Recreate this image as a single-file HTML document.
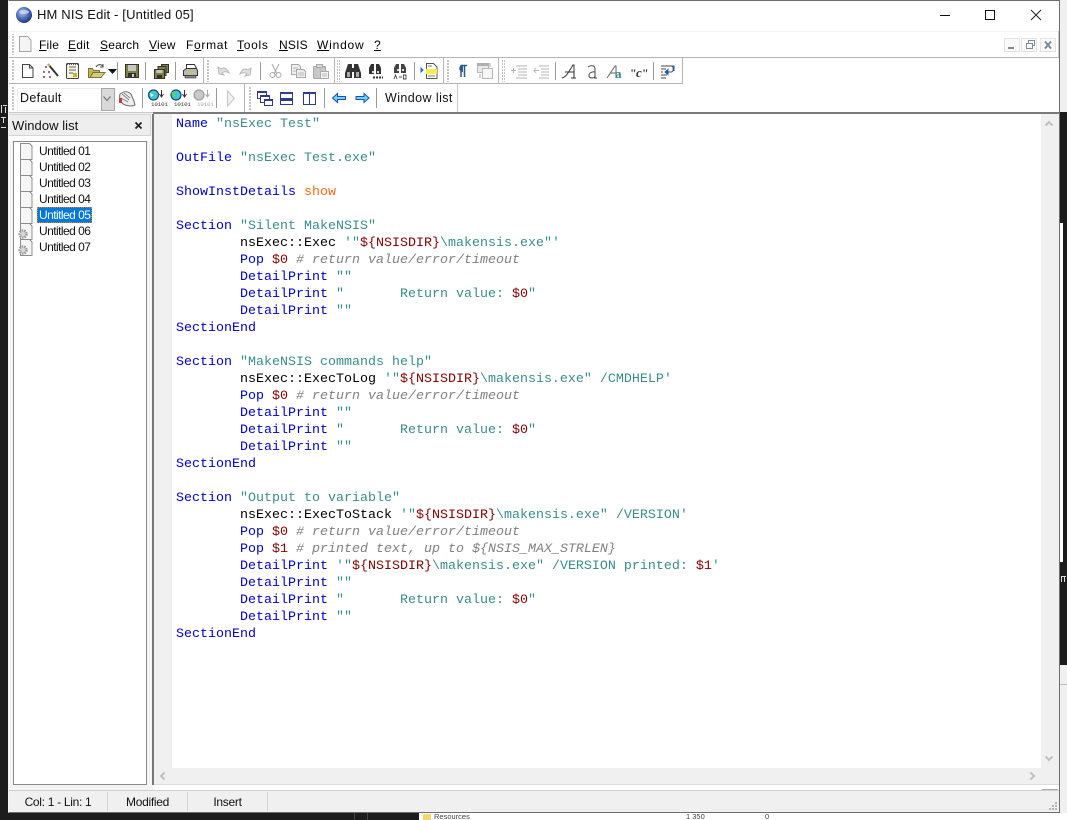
<!DOCTYPE html>
<html><head><meta charset="utf-8"><title>HM NIS Edit</title>
<style>
html,body{margin:0;padding:0;width:1067px;height:820px;overflow:hidden;background:#1c1c1c}
*{box-sizing:border-box}
.a{position:absolute}
body{position:relative;font-family:"Liberation Sans",sans-serif;color:#000}
.m{position:absolute;top:37px;font-size:12px;line-height:16px;letter-spacing:.2px;white-space:pre}
.l{position:absolute;left:39px;font-size:12px;line-height:16px;letter-spacing:-.55px;white-space:pre;color:#111}
#code{position:absolute;left:176px;top:116px;margin:0;font-family:"Liberation Mono",monospace;font-size:13.33px;line-height:17px;color:#000;white-space:pre;tab-size:8}
.k{color:#0000c8}.s{color:#3a8c8c}.v{color:#800000}.c{color:#808080;font-style:italic}.o{color:#ff6a1a}
.st{position:absolute;top:794px;font-size:12px;line-height:16px;letter-spacing:-.3px;color:#111;text-align:center}
</style></head><body>
<!-- outside desktop -->
<div class="a" style="left:1060px;top:0;width:7px;height:112px;background:#f0f0f0"></div>
<div class="a" style="left:1060px;top:223px;width:3px;height:339px;background:#fff"></div>
<div class="a" style="left:1060px;top:665px;width:7px;height:155px;background:#f0f0f0"></div>
<div class="a" style="left:1060px;top:684px;width:7px;height:1px;background:#bbb"></div>
<div class="a" style="left:419px;top:813px;width:648px;height:7px;background:#fff"></div>
<div class="a" style="left:423px;top:814px;width:8px;height:6px;background:#f5d56e"></div>
<div class="a" style="left:434px;top:813px;font-size:7.5px;line-height:8px;color:#444">Resources</div>
<div class="a" style="left:686px;top:813px;font-size:7.5px;line-height:8px;color:#444">1 350</div>
<div class="a" style="left:765px;top:813px;font-size:7.5px;line-height:8px;color:#444">0</div>
<div class="a" style="left:354px;top:813px;width:1px;height:7px;background:#444"></div>
<div class="a" style="left:367px;top:813px;width:1px;height:7px;background:#444"></div>
<!-- window -->
<div class="a" style="left:8px;top:0;width:1052px;height:813px;background:#fff;border:1px solid #6e6e6e;border-left-color:#f4f4f4;border-bottom-color:#6e6e6e"></div>
<div class="a" style="left:37px;top:7px;font-size:13px;line-height:16px;letter-spacing:.16px;color:#111;white-space:pre">HM NIS Edit - [Untitled 05]</div>
<!-- band lines -->
<div class="a" style="left:9px;top:31px;width:1050px;height:1px;background:#f2f2f2"></div>
<div class="a" style="left:9px;top:57px;width:1050px;height:1px;background:#b4b4b4"></div>
<div class="a" style="left:1058px;top:31px;width:1px;height:26px;background:#c8c8c8"></div>
<div class="a" style="left:9px;top:83px;width:674px;height:1px;background:#b4b4b4"></div>
<div class="a" style="left:682px;top:58px;width:1px;height:26px;background:#b4b4b4"></div>
<div class="a" style="left:457px;top:84px;width:1px;height:28px;background:#c8c8c8"></div>
<div class="a" style="left:9px;top:112px;width:144px;height:1px;background:#c8c8c8"></div>
<div class="a" style="left:153px;top:112px;width:906px;height:2px;background:#7a7a7a"></div>
<!-- menu -->
<div class="m" style="left:39px"><u>F</u>ile</div>
<div class="m" style="left:68px"><u>E</u>dit</div>
<div class="m" style="left:100px"><u>S</u>earch</div>
<div class="m" style="left:149px"><u>V</u>iew</div>
<div class="m" style="left:186px;letter-spacing:.7px"><span>F</span><u>o</u>rmat</div>
<div class="m" style="left:237px;letter-spacing:.7px"><u>T</u>ools</div>
<div class="m" style="left:279px"><u>N</u>SIS</div>
<div class="m" style="left:317px;letter-spacing:.8px"><u>W</u>indow</div>
<div class="m" style="left:374px"><u>?</u></div>
<!-- combo -->
<div class="a" style="left:17px;top:88px;width:98px;height:23px;background:#fff;border:1px solid #eee"></div>
<div class="a" style="left:101px;top:88px;width:14px;height:23px;background:#d9d9d9;border:1px solid #a8a8a8"></div>
<div class="a" style="left:20px;top:90px;font-size:12.5px;line-height:16px;letter-spacing:.3px;color:#111">Default</div>
<div class="a" style="left:385px;top:90px;font-size:12.5px;line-height:16px;letter-spacing:.42px;color:#111">Window list</div>
<!-- window list panel -->
<div class="a" style="left:9px;top:113px;width:144px;height:677px;background:#f4f4f4"></div>
<div class="a" style="left:9px;top:114px;width:142px;height:22px;background:#eee;border:1px solid #d4d4d4;border-left:0"></div>
<div class="a" style="left:9px;top:136px;width:142px;height:5px;background:#fff"></div>
<div class="a" style="left:12px;top:117px;font-size:13px;line-height:17px;letter-spacing:.05px;color:#111">Window list</div>
<div class="a" style="left:13px;top:141px;width:134px;height:644px;background:#fff;border:1px solid #8a8a8a"></div>
<div class="a" style="left:37px;top:207px;width:55px;height:16px;background:#0078d7;outline:1px dotted #d98020;outline-offset:-1px"></div>
<div class="l" style="top:143px">Untitled 01</div>
<div class="l" style="top:159px">Untitled 02</div>
<div class="l" style="top:175px">Untitled 03</div>
<div class="l" style="top:191px">Untitled 04</div>
<div class="l" style="top:207px;color:#fff">Untitled 05</div>
<div class="l" style="top:223px">Untitled 06</div>
<div class="l" style="top:239px">Untitled 07</div>
<!-- editor -->
<div class="a" style="left:152px;top:114px;width:2px;height:671px;background:#777"></div>
<div class="a" style="left:154px;top:114px;width:18px;height:654px;background:#f0f0f0"></div>
<div class="a" style="left:1041px;top:114px;width:18px;height:671px;background:#f0f0f0"></div>
<div class="a" style="left:154px;top:768px;width:905px;height:16px;background:#f0f0f0"></div>
<div class="a" style="left:154px;top:784px;width:905px;height:1px;background:#dcdcdc"></div>
<div class="a" style="left:9px;top:790px;width:1050px;height:1px;background:#cfcfcf"></div>
<div class="a" style="left:1042px;top:789px;width:16px;height:1px;background:#a8a8a8"></div>
<div class="a" style="left:9px;top:791px;width:1050px;height:21px;background:#f0f0f0"></div>
<div class="a" style="left:107px;top:792px;width:1px;height:19px;background:#d4d4d4"></div>
<div class="a" style="left:187px;top:792px;width:1px;height:19px;background:#d4d4d4"></div>
<div class="a" style="left:267px;top:792px;width:1px;height:19px;background:#d4d4d4"></div>
<div class="st" style="left:9px;width:98px">Col: 1 - Lin: 1</div>
<div class="st" style="left:108px;width:79px">Modified</div>
<div class="st" style="left:188px;width:79px">Insert</div>
<pre id="code"><span class="k">Name</span> <span class="s">"nsExec Test"</span>

<span class="k">OutFile</span> <span class="s">"nsExec Test.exe"</span>

<span class="k">ShowInstDetails</span> <span class="o">show</span>

<span class="k">Section</span> <span class="s">"Silent MakeNSIS"</span>
	nsExec::Exec <span class="s">'"</span><span class="v">${NSISDIR}</span><span class="s">\makensis.exe"'</span>
	<span class="k">Pop</span> <span class="v">$0</span> <span class="c"># return value/error/timeout</span>
	<span class="k">DetailPrint</span> <span class="s">""</span>
	<span class="k">DetailPrint</span> <span class="s">"       Return value: </span><span class="v">$0</span><span class="s">"</span>
	<span class="k">DetailPrint</span> <span class="s">""</span>
<span class="k">SectionEnd</span>

<span class="k">Section</span> <span class="s">"MakeNSIS commands help"</span>
	nsExec::ExecToLog <span class="s">'"</span><span class="v">${NSISDIR}</span><span class="s">\makensis.exe" /CMDHELP'</span>
	<span class="k">Pop</span> <span class="v">$0</span> <span class="c"># return value/error/timeout</span>
	<span class="k">DetailPrint</span> <span class="s">""</span>
	<span class="k">DetailPrint</span> <span class="s">"       Return value: </span><span class="v">$0</span><span class="s">"</span>
	<span class="k">DetailPrint</span> <span class="s">""</span>
<span class="k">SectionEnd</span>

<span class="k">Section</span> <span class="s">"Output to variable"</span>
	nsExec::ExecToStack <span class="s">'"</span><span class="v">${NSISDIR}</span><span class="s">\makensis.exe" /VERSION'</span>
	<span class="k">Pop</span> <span class="v">$0</span> <span class="c"># return value/error/timeout</span>
	<span class="k">Pop</span> <span class="v">$1</span> <span class="c"># printed text, up to ${NSIS_MAX_STRLEN}</span>
	<span class="k">DetailPrint</span> <span class="s">'"</span><span class="v">${NSISDIR}</span><span class="s">\makensis.exe" /VERSION printed: </span><span class="v">$1</span><span class="s">'</span>
	<span class="k">DetailPrint</span> <span class="s">""</span>
	<span class="k">DetailPrint</span> <span class="s">"       Return value: </span><span class="v">$0</span><span class="s">"</span>
	<span class="k">DetailPrint</span> <span class="s">""</span>
<span class="k">SectionEnd</span></pre>

<svg class="a" style="left:0;top:0" width="1067" height="820" viewBox="0 0 1067 820" fill="none">
<defs>
<radialGradient id="g" cx=".4" cy=".35" r=".7"><stop offset="0" stop-color="#b8c8e8"/><stop offset=".55" stop-color="#4a6cb8"/><stop offset="1" stop-color="#1c3070"/></radialGradient>
<pattern id="grip" width="3" height="3" patternUnits="userSpaceOnUse"><rect width="2" height="2" fill="#c4c4c4"/></pattern>
</defs>
<!-- desktop scraps -->
<g fill="#ddd"><rect x="1" y="105" width="1" height="8"/><rect x="3" y="105" width="4" height="1"/><rect x="5" y="107" width="1" height="6"/><rect x="1" y="117" width="5" height="1"/><rect x="3" y="118" width="1" height="5"/><rect x="1" y="127" width="5" height="1"/><rect x="1061" y="576" width="5" height="1"/><rect x="1061" y="577" width="1" height="5"/><rect x="1064" y="577" width="1" height="5"/></g>
<!-- app icon -->
<circle cx="24" cy="15" r="8" fill="url(#g)"/><ellipse cx="24" cy="12" rx="5" ry="2" fill="#cfd8ee" opacity=".8"/>
<!-- window controls -->
<path d="M940 15.5h10" stroke="#111"/>
<rect x="985.5" y="10.5" width="9" height="9" stroke="#111"/>
<path d="M1031 10l10 10M1041 10l-10 10" stroke="#222"/>
<!-- grippers -->
<rect x="11" y="34" width="3" height="21" fill="url(#grip)"/>
<rect x="11" y="60" width="3" height="21" fill="url(#grip)"/>
<rect x="11" y="86" width="3" height="24" fill="url(#grip)"/>
<rect x="206" y="60" width="3" height="22" fill="url(#grip)"/>
<rect x="337" y="60" width="3" height="22" fill="url(#grip)"/>
<rect x="446" y="60" width="3" height="22" fill="url(#grip)"/>
<rect x="502" y="60" width="3" height="22" fill="url(#grip)"/>
<rect x="248" y="86" width="3" height="24" fill="url(#grip)"/>
<!-- band breaks -->
<g fill="#b8b8b8"><rect x="203" y="58" width="1" height="26"/><rect x="334" y="58" width="1" height="26"/><rect x="443" y="58" width="1" height="26"/><rect x="498" y="58" width="1" height="26"/><rect x="244" y="84" width="1" height="28"/></g>
<!-- separators -->
<g fill="#9a9a9a"><rect x="117" y="62" width="1" height="18"/><rect x="145" y="62" width="1" height="18"/><rect x="175" y="62" width="1" height="18"/><rect x="260" y="62" width="1" height="18"/><rect x="414" y="62" width="1" height="18"/><rect x="555" y="62" width="1" height="18"/><rect x="653" y="62" width="1" height="18"/><rect x="142" y="88" width="1" height="20"/><rect x="216" y="88" width="1" height="20"/><rect x="324" y="88" width="1" height="20"/><rect x="376" y="88" width="1" height="20"/></g>
<!-- menu doc -->
<path d="M19.5 36.5h8l3.5 3.5v11.5h-11.5z" fill="#f4f4f4" stroke="#a4a4a4"/>
<!-- MDI buttons -->
<g stroke="#e2e2e2" fill="#fafafa"><rect x="1004.5" y="38.5" width="15" height="13"/><rect x="1021.5" y="38.5" width="15" height="13"/><rect x="1040.5" y="38.5" width="15" height="13"/></g>
<rect x="1008" y="47" width="6" height="2" fill="#7a8a9a"/>
<path d="M1026.5 43.5h6v5h-6zM1028.500 43v-2.500h6v5h-2" stroke="#7a8a9a"/>
<path d="M1045 41.500l6 7M1051 41.500l-6 7" stroke="#7a8a9a" stroke-width="2"/>
<!-- new -->
<path d="M22.500 64.500h7l3.500 3.500v9.500H22.500z" fill="#fff" stroke="#444"/><path d="M29.500 64.500v3.500h3.500" stroke="#444"/>
<!-- wand -->
<path d="M48 64l10 12" stroke="#333" stroke-width="2"/><path d="M48 64l2 2" stroke="#c8b060" stroke-width="2"/>
<g fill="#a06a7a"><rect x="45" y="66" width="2" height="2"/><rect x="43" y="71" width="2" height="2"/><rect x="48" y="71" width="2" height="2"/><rect x="43" y="76" width="2" height="2"/><rect x="49" y="76" width="2" height="2"/></g>
<!-- template -->
<rect x="66.500" y="63.500" width="12" height="15" rx="1" fill="#f4f0e4" stroke="#444"/><path d="M69 67h7M69 70h7M69 73h4" stroke="#666"/><rect x="73" y="73" width="4" height="4" fill="#c8b820"/><path d="M67 64.500h11" stroke="#555" stroke-dasharray="1 1"/>
<!-- open -->
<path d="M88.500 68.500h4l1 2h6v7h-11z" fill="#c8b850" stroke="#777640"/><path d="M90 77.500l3-5h12l-4 5z" fill="#d8cc78" stroke="#777640"/><path d="M96 67c2-3 5-3 7-1" stroke="#444"/><path d="M103 64v3h-3" stroke="#444"/>
<path d="M108 69h9l-4.500 5z" fill="#111"/>
<!-- save -->
<rect x="125.500" y="64.500" width="13" height="13" fill="#808040" stroke="#333"/><rect x="128" y="65" width="8" height="6" fill="#c8c8c0"/><rect x="128" y="73" width="8" height="5" fill="#333"/><rect x="132" y="74" width="2" height="3" fill="#ccc"/>
<!-- save all -->
<rect x="161.500" y="64.500" width="7" height="8" fill="#808040" stroke="#333"/><rect x="158" y="66.500" width="8" height="9" fill="#808040" stroke="#333"/><rect x="154.500" y="69.500" width="10" height="9" fill="#808040" stroke="#333"/><rect x="156.500" y="70" width="6" height="3" fill="#c8c8c0"/><rect x="157" y="75" width="5" height="3" fill="#333"/>
<!-- print -->
<path d="M186.500 64.500h8l2 4h-10z" fill="#fff" stroke="#333"/><path d="M183.500 70.500l3-2h10l1 2v5h-14z" fill="#b8b8b8" stroke="#333"/><rect x="185" y="75.500" width="11" height="2.500" fill="#888" stroke="#333" stroke-width=".6"/><path d="M188 72.500h6" stroke="#d8c840" stroke-width="1.500"/>
<!-- undo/redo -->
<path d="M219 74l-1-7 3 2c3-2 6-1 8 4-3-2-5-2-7 0l2 2z" fill="#e0e0e0" stroke="#b8b8b8"/>
<path d="M250 75l1-7-3 2c-3-2-6-1-8 4 3-2 5-2 7 0l-2 2z" fill="#e0e0e0" stroke="#b8b8b8"/>
<!-- cut -->
<path d="M272 64l5 10M279 64l-5 10" stroke="#a8a8a8"/><circle cx="272.500" cy="75" r="2.500" stroke="#a8a8a8"/><circle cx="278.500" cy="75" r="2.500" stroke="#a8a8a8"/>
<!-- copy -->
<path d="M291.500 64.500h7l2 2v8h-9z" fill="#f0f0f0" stroke="#a8a8a8"/><path d="M296.500 69.500h7l2 2v6h-9z" fill="#f0f0f0" stroke="#a8a8a8"/><path d="M293 68h5M293 71h3M298 73h6M298 75h6" stroke="#b8b8b8"/>
<!-- paste -->
<rect x="313.500" y="66.500" width="12" height="12" rx="1" fill="#c8c8c8" stroke="#a8a8a8"/><rect x="316.500" y="64.500" width="6" height="3" fill="#d8d8d8" stroke="#a8a8a8"/><path d="M320.500 71.500h8v7h-8z" fill="#f4f4f4" stroke="#a8a8a8"/><path d="M322 74h5M322 76h5" stroke="#b8b8b8"/>
<!-- binoculars -->
<g fill="#333"><path d="M348 64h4v4h1v4h-1v6h-7v-5z"/><path d="M358 64h-4v4h-1v4h1v6h7v-5z"/></g><rect x="347" y="72" width="3" height="5" fill="#aaa"/><rect x="356" y="72" width="3" height="5" fill="#aaa"/>
<g fill="#333"><path d="M371 64h3v10h-5v-6zM379 64h-3v10h5v-6z"/></g><rect x="372" y="71" width="2" height="2" fill="#ddd"/><rect x="377" y="71" width="2" height="2" fill="#ddd"/><path d="M373 77.500h10" stroke="#333" stroke-width="2" stroke-dasharray="2 1"/>
<g fill="#444"><path d="M396 64h3v9h-5v-5zM404 64h-3v9h5v-5z"/></g><rect x="397" y="69" width="2" height="2" fill="#ddd"/><rect x="402" y="69" width="2" height="2" fill="#ddd"/><path d="M394 79l1.500-4 1.500 4M399 77h3M403.500 75v4h2.500v-4z" stroke="#444" stroke-width=".9"/>
<!-- bookmark -->
<path d="M421 68v4l2-2z" fill="#1c70c8" stroke="#1c70c8"/><path d="M426.500 63.500h7l3.500 3.500v11.500h-10.500z" fill="#fff" stroke="#555"/><rect x="426" y="69" width="11" height="5" fill="#f8ec50"/><path d="M428 66h4M428 76h7" stroke="#777"/>
<!-- pilcrow -->
<path d="M461 77V65.500h6M464.500 77V65.500" stroke="#2c5a88" stroke-width="1.500"/><path d="M463 65c-5 0-5 7 0 7z" fill="#2c5a88"/>
<!-- wrap doc -->
<rect x="477.500" y="63.500" width="11" height="9" fill="#e8e8e8" stroke="#b8b8b8"/><rect x="477" y="63" width="12" height="3" fill="#b0b0b0"/><path d="M482.500 68.500h10v10h-10z" fill="#f6f6f6" stroke="#b8b8b8"/><path d="M490 63v4M480 74v4" stroke="#a8a8a8"/>
<!-- indent -->
<path d="M516 66h11M518 69h9M518 72h9M518 75h9M511 70.500h5M513.500 68v5M516 78h11" stroke="#b4b4b4"/>
<path d="M539 66h10M541 69h8M541 72h8M541 75h8M534 70.500h5M539 78h10" stroke="#b4b4b4"/><path d="M536 68l-2 2.500 2 2.500" stroke="#b4b4b4"/>
<!-- fonts -->
<path d="M562 78c3-1 4-2 6-5l5-8h1v13M565 72h9M571 78h5" stroke="#333"/>
<path d="M588 67c3-2 7-2 7 2v9M595 72c-7-1-8 6-3 6 2 0 3-1 3-2M594 78h3" stroke="#444"/>
<path d="M607 78l8-12h1v12M610 73h7" stroke="#666"/><text x="615" y="78" font-family="Liberation Serif,serif" font-weight="bold" font-size="13" fill="#2c8c8c">a</text>
<text x="630" y="77" font-family="Liberation Serif,serif" font-weight="bold" font-size="12" fill="#333">"</text><text x="636" y="77" font-family="Liberation Serif,serif" font-weight="bold" font-style="italic" font-size="13" fill="#333">c</text><text x="642" y="77" font-family="Liberation Serif,serif" font-weight="bold" font-size="12" fill="#333">"</text>
<!-- word wrap -->
<path d="M661 66h10c3 0 3 6 0 6h-5M661 69h5M661 72h2M661 75h6M661 78h5" stroke="#444"/><path d="M668 69.500l-3 2.500 3 2.500z" fill="#1c5ab0" stroke="#1c5ab0"/><path d="M672 66h2v5" stroke="#1c5ab0"/>
<!-- mouse/eye -->
<path d="M120 94c4-3 8-3 11 0l3 7 1 4-3 1c-5 0-8-1-10-3-2-3-3-6-2-9z" fill="#eee" stroke="#666"/><path d="M122 94l7 6M121 98l7 4M124 93l6 5" stroke="#888"/><rect x="119" y="98" width="3" height="5" fill="#c83c3c"/>
<!-- compile -->
<circle cx="153.500" cy="95" r="5" fill="#3cc8d8" stroke="#1c4a68" stroke-width="1.200"/><path d="M150 93l4 2-3 2" fill="#e8f8f8" stroke="none"/><path d="M161.500 90v6M159.500 94l2 3 2-3" stroke="#333"/>
<text x="151" y="106" font-family="Liberation Mono,monospace" font-size="5.800" fill="#333" letter-spacing="-.1">10101</text>
<circle cx="176" cy="95" r="5" fill="#3cc8d8" stroke="#1c4a68" stroke-width="1.200"/><path d="M171 91l5 3-3 4z" fill="#60d060"/><path d="M184.500 90v6M182.500 94l2 3 2-3" stroke="#333"/>
<text x="174" y="106" font-family="Liberation Mono,monospace" font-size="5.800" fill="#333" letter-spacing="-.1">10101</text>
<circle cx="199" cy="95" r="5" fill="#c8c8c8" stroke="#a0a0a0" stroke-width="1.200"/><path d="M207.500 90v6M205.500 94l2 3 2-3" stroke="#aaa"/>
<text x="197" y="106" font-family="Liberation Mono,monospace" font-size="5.800" fill="#aaa" letter-spacing="-.1">10101</text>
<path d="M227.500 91l7 7.500-7 7.500z" fill="#f0f0f0" stroke="#c4c4c4"/>
<!-- combo arrow -->
<path d="M103.500 96.500l3.500 4 3.500-4" stroke="#777" stroke-width="1.200"/>
<!-- windows arrangement -->
<g stroke="#323a8c" fill="#fff"><rect x="257.500" y="91.500" width="9" height="7"/><rect x="260.500" y="95.500" width="9" height="7"/><rect x="264.500" y="99.500" width="8" height="6"/></g>
<g fill="#323a8c"><rect x="257" y="91" width="10" height="2"/><rect x="260" y="95" width="10" height="2"/><rect x="264" y="99" width="9" height="2"/></g>
<rect x="280.500" y="92.500" width="12" height="12" fill="#fff" stroke="#323a8c"/><rect x="280" y="92" width="13" height="2" fill="#323a8c"/><rect x="280" y="98" width="13" height="2" fill="#323a8c"/><rect x="280" y="100" width="13" height="1" fill="#323a8c"/>
<rect x="303.500" y="92.500" width="12" height="12" fill="#fff" stroke="#323a8c"/><rect x="303" y="92" width="13" height="2" fill="#323a8c"/><rect x="309" y="92" width="1" height="13" fill="#323a8c"/>
<!-- arrows -->
<path d="M332.500 98l5-4.500v3h8v3h-8v3z" fill="#6cd8f0" stroke="#1c4ac8"/>
<path d="M369 98l-5-4.500v3h-8v3h8v3z" fill="#6cd8f0" stroke="#1c4ac8"/>
<!-- close list -->
<path d="M135.500 122.500l6 6M141.500 122.500l-6 6" stroke="#222" stroke-width="1.800"/>
<!-- list icons -->
<g fill="#f6f6f6" stroke="#8c8c8c">
<path d="M20.500 143.500h9l2.500 2.500v13.500H20.500z"/><path d="M20.500 159.500h9l2.500 2.500v13.500H20.500z"/><path d="M20.500 175.500h9l2.500 2.500v13.500H20.500z"/><path d="M20.500 191.500h9l2.500 2.500v13.500H20.500z"/><path d="M20.500 207.500h9l2.500 2.500v13.500H20.500z"/><path d="M20.500 223.500h9l2.500 2.500v13.500H20.500z"/><path d="M20.500 239.500h9l2.500 2.500v13.500H20.500z"/>
</g>
<g stroke="#9c9c9c" fill="#d8d8d8"><circle cx="23" cy="234" r="3.500" stroke-width="2.500" stroke-dasharray="1.500 1"/><circle cx="23" cy="250" r="3.500" stroke-width="2.500" stroke-dasharray="1.500 1"/></g>
<!-- scroll arrows -->
<g stroke="#c0c0c0" stroke-width="2"><path d="M1045.500 125.500l3.500-3.500 3.500 3.500"/><path d="M1045.500 756.500l3.500 3.500 3.500-3.500"/><path d="M164.500 772.500l-3.500 3.500 3.500 3.500"/><path d="M1030.500 772.500l3.500 3.500-3.500 3.500"/></g>
<!-- size grip -->
<g fill="#b4b4b4"><rect x="1055" y="802" width="2" height="2"/><rect x="1052" y="805" width="2" height="2"/><rect x="1055" y="805" width="2" height="2"/><rect x="1049" y="808" width="2" height="2"/><rect x="1052" y="808" width="2" height="2"/><rect x="1055" y="808" width="2" height="2"/></g>
</svg>
</body></html>
